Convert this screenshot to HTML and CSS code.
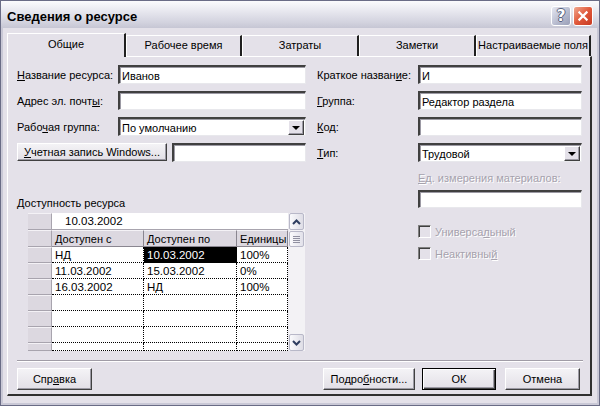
FILE: index.html
```html
<!DOCTYPE html>
<html lang="ru">
<head>
<meta charset="utf-8">
<title>Сведения о ресурсе</title>
<link rel="stylesheet" href="styles.css">
</head>
<body>
<div class="window">
  <div class="titlebar">
    <span class="title">Сведения о ресурсе</span>
    <div class="tbuttons">
      <span class="tbtn help">?</span>
      <span class="tbtn close">
        <svg width="20" height="20" viewBox="0 0 20 20"><path d="M6 6 L14 14 M14 6 L6 14" stroke="#fff" stroke-width="2.4" stroke-linecap="square"/></svg>
      </span>
    </div>
  </div>
  <div class="client">
    <div class="tabs">
      <div class="tab active">Общие</div>
      <div class="tab t2">Рабочее время</div>
      <div class="tab t3">Затраты</div>
      <div class="tab t4">Заметки</div>
      <div class="tab t5">Настраиваемые поля</div>
    </div>
    <div class="panel">
      <div class="main">
        <div class="col left">
          <div class="row"><label class="lbl"><u>Н</u>азвание ресурса:</label><div class="field w188">Иванов</div></div>
          <div class="row"><label class="lbl">Адрес эл. почт<u>ы</u>:</label><div class="field w188"></div></div>
          <div class="row"><label class="lbl">Рабо<u>ч</u>ая группа:</label><div class="field combo w188"><span>По умолчанию</span><span class="drop"><i class="tri"></i></span></div></div>
          <div class="row"><span class="btn winacc"><u>У</u>четная запись Windows...</span><div class="field w134"></div></div>
          <div class="avail-lbl"><u>Д</u>оступность ресурса</div>
          <div class="grid">
            <div class="cells">
              <div class="gr edit"><span class="rh"></span><span class="editcell">10.03.2002</span></div>
              <div class="gr head"><span class="rh"></span><span class="c c1 hc">Доступен с</span><span class="c c2 hc">Доступен по</span><span class="c c3 hc">Единицы</span></div>
              <div class="gr"><span class="rh"></span><span class="c c1">НД</span><span class="c c2 sel">10.03.2002</span><span class="c c3">100%</span></div>
              <div class="gr"><span class="rh"></span><span class="c c1">11.03.2002</span><span class="c c2">15.03.2002</span><span class="c c3">0%</span></div>
              <div class="gr"><span class="rh"></span><span class="c c1">16.03.2002</span><span class="c c2">НД</span><span class="c c3">100%</span></div>
              <div class="gr"><span class="rh"></span><span class="c c1"></span><span class="c c2"></span><span class="c c3"></span></div>
              <div class="gr"><span class="rh"></span><span class="c c1"></span><span class="c c2"></span><span class="c c3"></span></div>
              <div class="gr"><span class="rh"></span><span class="c c1"></span><span class="c c2"></span><span class="c c3"></span></div>
              <div class="gr part"><span class="rh"></span><span class="c c1"></span><span class="c c2"></span><span class="c c3"></span></div>
            </div>
            <div class="vscroll">
              <span class="sbtn"><svg width="9" height="6" viewBox="0 0 9 6"><path d="M1 5 L4.5 1.5 L8 5" fill="none" stroke="#2f3e60" stroke-width="2"/></svg></span>
              <span class="thumb"><i></i><i></i><i></i><i></i></span>
              <span class="track"></span>
              <span class="sbtn"><svg width="9" height="6" viewBox="0 0 9 6"><path d="M1 1 L4.5 4.5 L8 1" fill="none" stroke="#2f3e60" stroke-width="2"/></svg></span>
            </div>
          </div>
        </div>
        <div class="col right">
          <div class="row"><label class="lbl">Краткое назван<u>и</u>е:</label><div class="field w164">И</div></div>
          <div class="row"><label class="lbl"><u>Г</u>руппа:</label><div class="field w164">Редактор раздела</div></div>
          <div class="row"><label class="lbl"><u>К</u>од:</label><div class="field w164"></div></div>
          <div class="row"><label class="lbl"><u>Т</u>ип:</label><div class="field combo w164"><span>Трудовой</span><span class="drop"><i class="tri"></i></span></div></div>
          <div class="mat-lbl dis"><u>Е</u>д. измерения материалов:</div>
          <div class="field mat w164"></div>
          <div class="chk first"><span class="box"></span><span class="dis">Универса<u>л</u>ьный</span></div>
          <div class="chk"><span class="box"></span><span class="dis">Неактивны<u>й</u></span></div>
        </div>
      </div>
      <div class="sep"></div>
      <div class="buttons">
        <span class="btn b-help">Спр<u>а</u>вка</span>
        <span class="spacer"></span>
        <span class="btn b-det">Подро<u>б</u>ности...</span>
        <span class="btn b-ok">ОК</span>
        <span class="btn b-cancel">Отмена</span>
      </div>
    </div>
  </div>
</div>
</body>
</html>
```

FILE: styles.css
```css
* { box-sizing: border-box; }
html, body { margin: 0; padding: 0; }
body {
  width: 600px; height: 406px; overflow: hidden;
  font-family: "Liberation Sans", Arial, sans-serif;
  font-size: 11px; color: #000; background: #fff;
}
u { text-decoration: underline; text-underline-offset: 1px; }

.window {
  width: 600px; height: 406px;
  display: flex; flex-direction: column;
  background: #c9c8d6;
  border: 1px solid #6a6c86;
}
.titlebar {
  height: 27px; flex: none;
  display: flex; align-items: center; justify-content: space-between;
  padding: 3px 6px 0 6px;
  background: linear-gradient(#fbfbfd 0%, #e9e9f0 35%, #d2d2de 80%, #c6c6d4 100%);
}
.title {
  font-weight: bold; font-size: 13px; color: #000;
}
.tbuttons { display: flex; gap: 2px; margin-top: -1px; }
.tbtn {
  width: 20px; height: 20px; border-radius: 3px;
  border: 1px solid #fff;
  display: flex; align-items: center; justify-content: center;
}
.help {
  background: linear-gradient(135deg, #e6e8f2 0%, #b4b8cc 60%, #9a9fb8 100%);
  color: #fff; font-weight: bold; font-size: 15px;
  font-family: "DejaVu Sans", sans-serif;
  text-shadow: 1px 0 #58607c, -1px 0 #58607c, 0 1px #58607c, 0 -1px #58607c;
}
.close {
  background: linear-gradient(135deg, #f0a890 0%, #e0583a 50%, #c83a22 100%);
}

.client {
  flex: 1; margin: 0 2px 2px 2px;
  background: #e4e1e9;
  padding: 5px 5px 7px 4px;
  display: flex; flex-direction: column;
}
.tabs { display: flex; height: 23px; align-items: flex-end; position: relative; z-index: 1; }
.tab {
  height: 21px; display: flex; align-items: center; justify-content: center;
  border-top: 1px solid #fff; border-left: 1px solid #fff;
  border-right: 2px solid #202020;
  background: #e4e1e9;
  padding-bottom: 2px;
}
.tab.active { height: 24px; width: 119px; margin-bottom: -1px; padding-bottom: 3px; }
.t2 { width: 116px; }
.t3 { width: 117px; }
.t4 { width: 117px; }
.t5 { width: 115px; }

.panel {
  flex: 1;
  border-top: 1px solid #fff; border-left: 1px solid #fff;
  border-right: 2px solid #303030; border-bottom: 2px solid #303030;
  padding: 8px 0 0 9px;
  display: flex; flex-direction: column;
}
.main { display: flex; gap: 11px; }
.col { display: flex; flex-direction: column; }
.col.left { width: 289px; }
.col.right { width: 265px; }
.row { display: flex; align-items: center; height: 19px; margin-bottom: 7px; }
.lbl { width: 101px; flex: none; white-space: nowrap; }

.field {
  height: 19px; background: #fff;
  border-top: 2px solid #404040; border-left: 2px solid #404040;
  border-right: 1px solid #e8e8ec; border-bottom: 1px solid #e8e8ec;
  box-shadow: inset 1px 1px 0 #9c9aa4;
  padding: 1px 2px 0 2px;
  display: flex; align-items: center;
  white-space: nowrap;
}
.w188 { width: 188px; }
.w164 { width: 164px; }
.w134 { width: 134px; margin-left: 5px; }
.combo { justify-content: space-between; padding-right: 1px; }
.drop {
  width: 16px; height: 15px;
  background: #e4e1e9;
  border-top: 1px solid #fff; border-left: 1px solid #fff;
  border-right: 1px solid #404040; border-bottom: 1px solid #404040;
  box-shadow: inset -1px -1px 0 #9c9aa4;
  display: flex; align-items: center; justify-content: center;
}
.tri {
  width: 0; height: 0;
  border-left: 4px solid transparent; border-right: 4px solid transparent;
  border-top: 4px solid #000;
}

.btn {
  height: 18px; display: flex; align-items: center; justify-content: center;
  background: linear-gradient(#f4f3f6, #e2dfe6);
  border-top: 1px solid #fff; border-left: 1px solid #fff;
  border-right: 1px solid #404040; border-bottom: 1px solid #404040;
  box-shadow: inset -1px -1px 0 #9c9aa4;
  white-space: nowrap;
}
.winacc { width: 150px; margin-top: -2px; }

.avail-lbl { margin-top: 28px; height: 13px; line-height: 13px; }
.grid {
  margin-top: 3px; margin-left: 11px;
  width: 277px; height: 138px;
  display: flex; background: #fff; overflow: hidden;
}
.cells { width: 260px; display: flex; flex-direction: column; }
.gr { display: flex; height: 16px; flex: none; }
.gr.edit, .gr.head { height: 17px; }
.gr.part { height: 8px; }
.rh {
  width: 24px; flex: none; background: #dcd8e0;
  border-top: 1px solid #f4f2f6; border-right: 1px solid #a8a4ae; border-bottom: 1px solid #a8a4ae;
}
.editcell {
  flex: 1; padding-left: 13px; display: flex; align-items: center;
  border-bottom: 1px solid #a8a4ae;
  font-size: 11.5px;
}
.c {
  flex: none; display: flex; align-items: center; padding-left: 3px;
  border-right: 1px dotted #000; border-bottom: 1px dotted #000;
  white-space: nowrap; overflow: hidden;
  font-size: 11.5px;
}
.c1 { width: 92px; }
.c2 { width: 93px; }
.c3 { width: 51px; }
.hc {
  background: #dcd8e0;
  border-right: 1px solid #8a8690; border-bottom: 1px solid #8a8690;
  border-top: 1px solid #f4f2f6;
  font-size: 11px;
}
.sel { background: #000; color: #fff; }

.vscroll {
  width: 17px; flex: none; display: flex; flex-direction: column;
  background: #f3f2f5;
  border-left: 1px solid #eceaf0;
}
.sbtn {
  height: 17px; flex: none; margin: 0 1px 0 0;
  border: 1px solid #b8b8c8; border-radius: 2px;
  background: linear-gradient(90deg, #fafafc, #dedde6);
  display: flex; align-items: center; justify-content: center;
}
.thumb {
  height: 16px; flex: none; margin: 1px 1px 0 0;
  border: 1px solid #b8b8c8; border-radius: 2px;
  background: linear-gradient(90deg, #fafafc, #e2e1ea);
  display: flex; flex-direction: column; align-items: center; justify-content: center; gap: 1px;
}
.thumb i { display: block; width: 7px; height: 1px; background: #9090a0; }
.track { flex: 1; }

.mat-lbl { margin-top: 3px; margin-left: 101px; height: 13px; line-height: 13px; }
.mat { margin-top: 5px; margin-left: 101px; height: 18px; }
.dis { color: #a6a2ad; text-shadow: 1px 1px 0 #fff; }
.dis u { text-decoration-color: #a6a2ad; }
.chk { display: flex; align-items: center; margin-left: 101px; height: 13px; gap: 4px; }
.chk.first { margin-top: 17px; }
.chk + .chk { margin-top: 9px; }
.box {
  width: 13px; height: 13px; flex: none;
  border-top: 1px solid #808080; border-left: 1px solid #808080;
  border-right: 1px solid #fff; border-bottom: 1px solid #fff;
  box-shadow: inset 1px 1px 0 #404040;
  background: #e4e1e9;
}

.sep {
  margin-top: 9px; margin-right: 7px;
  height: 2px; border-top: 1px solid #a09ca6; border-bottom: 1px solid #fff;
}
.buttons { display: flex; margin-top: 6px; height: 22px; padding-right: 10px; }
.buttons .btn { height: 22px; }
.spacer { flex: 1; }
.b-help { width: 75px; }
.b-det { width: 92px; }
.b-ok { width: 74px; margin-left: 7px; border: 1px solid #000; box-shadow: inset 1px 1px 0 #fff, inset -1px -1px 0 #404040, inset -2px -2px 0 #9c9aa4; }
.b-cancel { width: 75px; margin-left: 9px; }
```
